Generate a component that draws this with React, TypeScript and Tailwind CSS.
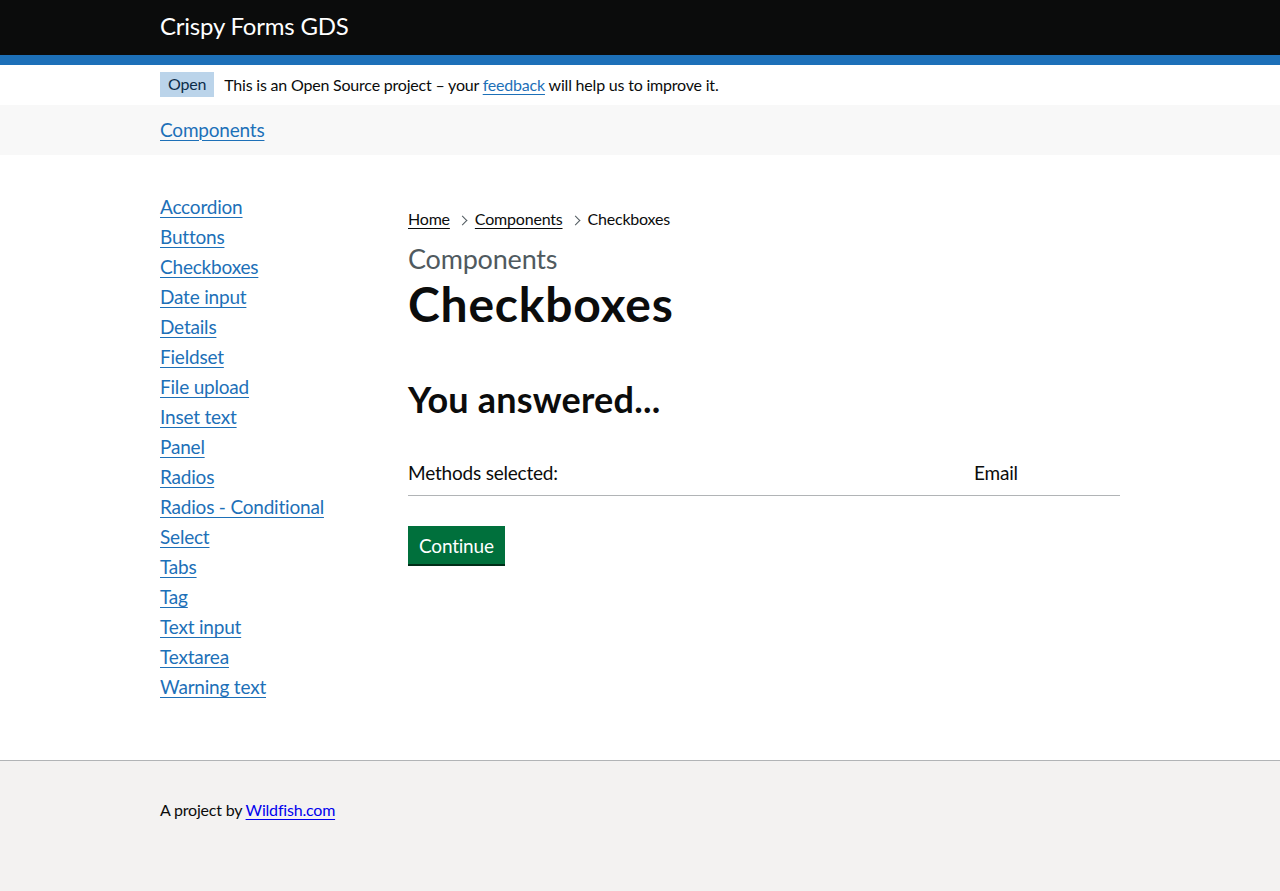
const sideLinks = [
  'Accordion',
  'Buttons',
  'Checkboxes',
  'Date input',
  'Details',
  'Fieldset',
  'File upload',
  'Inset text',
  'Panel',
  'Radios',
  'Radios - Conditional',
  'Select',
  'Tabs',
  'Tag',
  'Text input',
  'Textarea',
  'Warning text',
];

const linkClass = 'text-[#1d70b8] underline decoration-1 underline-offset-[3px]';

const Chevron = () => (
  <span className="mx-[9px] inline-block h-[7px] w-[7px] translate-y-[1px] rotate-45 border-t border-r border-[#505a5f]" />
);

const App = () => {
  return (
    <div className="min-h-[891px] flex flex-col bg-white font-['Lato','Liberation_Sans',sans-serif] tracking-[-0.2px] text-[#0b0c0c]">
      {/* header */}
      <header className="h-[65px] border-b-[10px] border-[#1d70b8] bg-[#0b0c0c]">
        <div className="mx-auto w-[960px] pt-[11px]">
          <span className="text-[24px] leading-[30px] text-white">Crispy Forms GDS</span>
        </div>
      </header>

      {/* phase banner */}
      <div className="h-[40px] bg-white">
        <div className="mx-auto flex w-[960px] items-center pt-[7px]">
          <strong className="bg-[#bbd4ea] px-[8px] pt-[2px] pb-[3px] text-[16px] font-normal leading-[20px] text-[#0c2d4a]">
            Open
          </strong>
          <span className="ml-[10px] text-[16px] leading-[20px]">
            This is an Open Source project – your{' '}
            <a href="#" className={linkClass}>
              feedback
            </a>{' '}
            will help us to improve it.
          </span>
        </div>
      </div>

      {/* service nav */}
      <nav className="h-[50px] bg-[#f8f8f8]">
        <div className="mx-auto flex h-full w-[960px] items-center pb-[2px]">
          <a href="#" className={`${linkClass} text-[19px] leading-[25px]`}>
            Components
          </a>
        </div>
      </nav>

      {/* main */}
      <main className="mx-auto flex w-[960px] flex-1 pt-[39px] pb-[56px]">
        <div className="w-[248px] shrink-0">
          <ul className="flex flex-col gap-[5px]">
            {sideLinks.map((l) => (
              <li key={l} className="text-[19px] leading-[25px]">
                <a href="#" className={linkClass}>
                  {l}
                </a>
              </li>
            ))}
          </ul>
        </div>

        <div className="flex-1 pt-[1px]">
          <div className="mt-[14px] mb-[15px] flex items-center text-[16px] leading-[20px]">
            <a href="#" className="text-[#0b0c0c] underline decoration-1 underline-offset-[3px]">
              Home
            </a>
            <Chevron />
            <a href="#" className="text-[#0b0c0c] underline decoration-1 underline-offset-[3px]">
              Components
            </a>
            <Chevron />
            <span>Checkboxes</span>
          </div>

          <span className="block mb-[5px] text-[27px] leading-[30px] text-[#505a5f]">Components</span>
          <h1 className="mb-[50px] text-[48px] font-bold leading-[50px] tracking-[0.8px]">Checkboxes</h1>

          <h2 className="mb-[31px] text-[36px] font-bold leading-[40px] tracking-[0.2px]">You answered...</h2>

          <dl className="mb-[30px] grid grid-cols-[1fr_146px] border-b border-[#b1b4b6] py-[10px] text-[19px] leading-[25px]">
            <dt>Methods selected:</dt>
            <dd>Email</dd>
          </dl>

          <button className="bg-[#00703c] px-[11px] pt-[8px] pb-[7px] text-[19px] leading-[23px] text-white shadow-[0_2px_0_#002d18]">
            Continue
          </button>
        </div>
      </main>

      {/* footer */}
      <footer className="h-[131px] border-t border-[#b1b4b6] bg-[#f3f2f1]">
        <div className="mx-auto w-[960px] pt-[39px] text-[16px] leading-[20px]">
          A project by{' '}
          <a href="#" className="text-[#0000ee] underline underline-offset-[3px]">
            Wildfish.com
          </a>
        </div>
      </footer>
    </div>
  );
};

export default App;
